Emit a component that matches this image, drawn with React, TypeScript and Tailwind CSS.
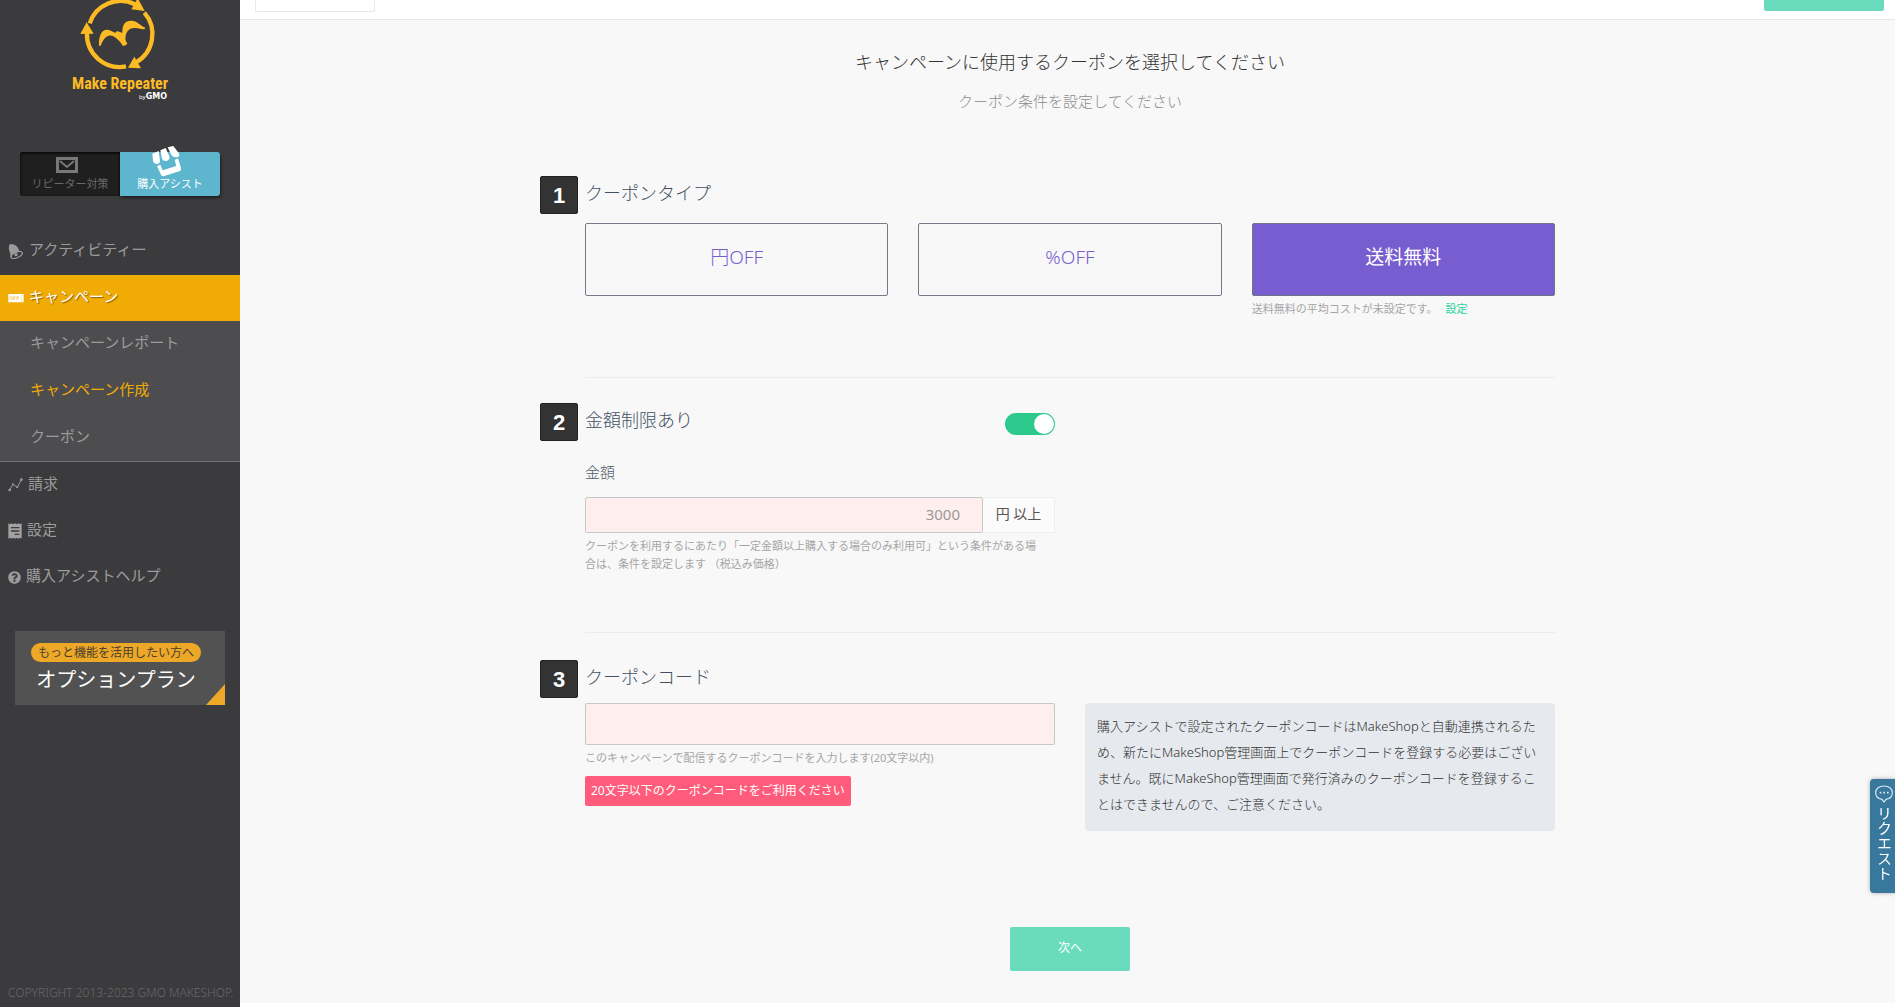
import React from "react";
import { FaQuestionCircle } from "react-icons/fa";

function Logo() {
  return (
    <a href="#" aria-label="Make Repeater by GMO" className="flex h-[152px] flex-col items-center">
      <svg className="h-[72px] w-[240px]" viewBox="0 0 720 216" fill="none" aria-hidden="true">
        <g stroke="#fcba24" strokeWidth="13">
          <path d="M269 70A98 98 0 0 1 405 13" />
          <path d="M433 38A98 98 0 0 1 407 188" />
          <path d="M378 199A98 98 0 0 1 261 98" />
        </g>
        <g fill="#fcba24">
          <path d="M413 -6L434 33L394 28Z" />
          <path d="M241 102L260 67L281 101Z" />
          <path d="M384 203L403 170L423 205Z" />
          <path d="M297 137C296 112 302 89 322 89C333 89 339 98 347 98C350 93 355 92 360 97L367 98C367 77 372 62 393 62C412 62 422 78 436 83C436 89 425 88 412 85C393 80 380 90 377 108C376 116 375 122 382 130C379 136 375 139 368 137C364 128 352 116 340 109C324 101 311 114 302 137Z" />
        </g>
      </svg>
      <span className="mt-[3px] font-['Liberation_Sans_Narrow','Roboto_Condensed',Roboto,sans-serif] text-[16px] leading-[18px] font-bold text-[#fcba24]">
        Make Repeater
      </span>
      <span className="flex w-[94px] items-baseline justify-end leading-[7px] text-white">
        <span className="text-[6px]">by</span>
        <span className="font-['DejaVu_Sans',sans-serif] text-[8px] font-bold">GMO</span>
      </span>
    </a>
  );
}

function ShopIcon() {
  return (
    <svg className="absolute -top-[6px] left-[30px] h-[32px] w-[32px]" viewBox="0 0 96 96" fill="#fff" aria-hidden="true">
      <path d="M7 23L26 15L30 45Q30 54 20 54Q9 53 9 43Z" />
      <path d="M31 13L47 6L58 31Q61 40 52 44Q40 47 36 38Z" />
      <path d="M53 4L70 0L86 21Q91 30 83 33Q70 36 64 27Z" />
      <path d="M21 60L31 56L38 73L79 60L74 42L84 37L93 67Q95 72 90 75L43 90Q36 92 33 86Z" />
    </svg>
  );
}

function ModeSwitch() {
  return (
    <div className="mx-5 flex h-11 rounded-[3px] text-[11px] leading-4">
      <button className="flex flex-1 flex-col items-center justify-end rounded-l-[3px] bg-[#1f1f1f] pb-1 text-[#69696b] shadow-[inset_0_1px_3px_#000]">
        <svg className="mr-[6px] mb-[3px] h-4 w-[22px]" viewBox="0 0 22 16" fill="none" stroke="#77787b" aria-hidden="true">
          <rect x="1.500" y="1.500" width="19" height="13" strokeWidth="3" />
          <path d="M4 4L11 10L18 4" strokeWidth="2" />
        </svg>
        <span>リピーター対策</span>
      </button>
      <button className="relative flex flex-1 flex-col items-center justify-end rounded-r-[3px] bg-[#5db6ce] pb-1 text-white shadow-[1px_2px_3px_rgba(0,0,0,0.5)]">
        <ShopIcon />
        購入アシスト
      </button>
    </div>
  );
}

function BellIcon() {
  return (
    <svg className="h-4 w-4" viewBox="0 0 48 48" aria-hidden="true">
      <path d="M5 4Q8 2 11 4Q22 3 30 15Q33 20 34 26L43 29L10 45L6 40Q9 34 5 27Q0 14 5 4Z" fill="#9b9b9c" />
      <ellipse cx="26" cy="36" rx="18" ry="8" transform="rotate(-24 26 36)" fill="#3b3b3d" stroke="#9b9b9c" strokeWidth="3.500" />
      <circle cx="24" cy="35" r="5" fill="#9b9b9c" />
    </svg>
  );
}

function TicketIcon() {
  return (
    <svg className="h-[10px] w-4" viewBox="0 0 48 30" aria-hidden="true">
      <path d="M1 3H36L37 1L39 3H47V28H1Z" fill="#fff" />
      <g fill="none" stroke="#f3b93a" strokeWidth="2">
        <rect x="6" y="11" width="7" height="9" rx="2" />
        <path d="M17 21V11H23M17 16H22M27 21V11H33M27 16H32" />
        <path d="M40 5V27" strokeDasharray="3 3" />
      </g>
    </svg>
  );
}

function ChartIcon() {
  return (
    <svg className="h-[14px] w-[15px]" viewBox="0 0 45 42" fill="none" stroke="#9b9b9c" strokeWidth="3" aria-hidden="true">
      <path d="M4 37L15 19L28 28L40 5" />
      <g fill="#9b9b9c" stroke="none">
        <circle cx="5" cy="36" r="4" />
        <circle cx="15" cy="19" r="3" />
        <circle cx="28" cy="28" r="3" />
        <circle cx="40" cy="5" r="4" />
      </g>
    </svg>
  );
}

function ReceiptIcon() {
  return (
    <svg className="h-4 w-[14px]" viewBox="0 0 42 48" aria-hidden="true">
      <path d="M1 1L6 4L11 1L16 4L21 1L26 4L31 1L36 4L41 1V47L36 44L31 47L26 44L21 47L16 44L11 47L6 44L1 47Z" fill="#a2a2a3" />
      <path d="M9 14H34M9 24H34M20 34H34" stroke="#3b3b3d" strokeWidth="4" />
    </svg>
  );
}

function NavItem({ icon, label, active = false }: { icon: React.ReactNode; label: string; active?: boolean }) {
  return (
    <a
      href="#"
      className={
        active
          ? "flex h-[46px] items-center gap-[5px] bg-[#f0ab05] pl-2 text-white [text-shadow:1px_1px_1px_#8a6200]"
          : "flex h-[46px] items-center gap-[5px] pl-2 text-[#9b9b9c]"
      }
    >
      <span className="flex min-w-[13px] shrink-0">{icon}</span>
      <span className="pb-1">{label}</span>
    </a>
  );
}

function Sidebar() {
  return (
    <aside className="flex w-[240px] shrink-0 flex-col bg-[#3b3b3d]">
      <Logo />
      <ModeSwitch />
      <nav className="mt-8 text-[15px] leading-5">
        <NavItem icon={<BellIcon />} label="アクティビティー" />
        <div className="mt-px" />
        <NavItem icon={<TicketIcon />} label="キャンペーン" active />
        <div className="flex flex-col border-b border-[#717173] bg-[#4d4d4f] text-[#9b9b9c]">
          <a href="#" className="flex h-[46px] items-center pb-1 pl-[30px]">キャンペーンレポート</a>
          <a href="#" className="flex h-[47px] items-center pb-1 pl-[30px] text-[#f0ab05]">キャンペーン作成</a>
          <a href="#" className="flex h-[47px] items-center pb-1 pl-[30px]">クーポン</a>
        </div>
        <NavItem icon={<ChartIcon />} label="請求" />
        <NavItem icon={<ReceiptIcon />} label="設定" />
        <NavItem icon={<FaQuestionCircle className="size-[13px]" />} label="購入アシストヘルプ" />
      </nav>
      <a href="#" className="relative mx-[15px] mt-[31px] flex h-[74px] flex-col items-center overflow-hidden bg-[#525252] pt-3 pr-2">
        <span className="rounded-full bg-[#eea827] px-[7px] text-[12px] leading-[19px] whitespace-nowrap text-[#4a4030]">もっと機能を活用したい方へ</span>
        <span className="mt-1 text-[20px] leading-7 whitespace-nowrap text-white">オプションプラン</span>
        <span className="absolute right-0 bottom-0 h-[21px] w-[19px] bg-[#eea827] [clip-path:polygon(100%_0,100%_100%,0_100%)]" />
      </a>
      <p className="mt-auto pb-1 pl-2 text-[12px] leading-5 font-light whitespace-nowrap text-[#68686a]">COPYRIGHT 2013-2023 GMO MAKESHOP.</p>
    </aside>
  );
}

function StepHeader({ step, title, children }: { step: number; title: string; children?: React.ReactNode }) {
  return (
    <div className="-ml-[45px] flex h-[38px] items-start">
      <span className="flex size-[38px] items-center justify-center rounded-[2px] border border-[#222] bg-[#333] font-['Liberation_Sans',Arial,sans-serif] text-[22px] font-bold text-white">
        {step}
      </span>
      <h2 className="ml-[7px] text-[18px] leading-[34px] font-light text-[#445062]">{title}</h2>
      {children}
    </div>
  );
}

function TypeButton({ label, selected = false }: { label: string; selected?: boolean }) {
  return (
    <button
      aria-pressed={selected}
      className={
        selected
          ? "block h-[73px] w-full rounded-[2px] border border-[#6f7487] bg-[#775dd0] pb-1 text-[19px] text-white"
          : "block h-[73px] w-full rounded-[2px] border border-[#747a8c] pb-1 text-[19px] font-light text-[#775dd0]"
      }
    >
      {label}
    </button>
  );
}

const fieldClass = "rounded-[2px] border border-[#c8c8c8] bg-[#ffeeee] outline-none";

export default function App() {
  return (
    <div className="flex min-h-screen bg-white font-['Noto_Sans','Noto_Sans_CJK_JP',sans-serif]" lang="ja">
      <Sidebar />
      <div className="flex min-w-0 flex-1 flex-col">
        <header className="flex h-5 items-start justify-between border-b border-[#e8e8e8] bg-white pr-[11px] pl-[15px]">
          <div className="h-3 w-[120px] rounded-b-[2px] border border-t-0 border-[#e8e8e8]" />
          <div className="h-[11px] w-[120px] rounded-b-[2px] bg-[#6adcbd]" />
        </header>
        <main className="bg-[#f8f8f8] pt-[30px] pb-8 pl-[5px]">
          <div className="mx-auto max-w-[1060px] px-[45px]">
            <h1 className="text-center text-[18px] leading-6 font-light text-[#333]">キャンペーンに使用するクーポンを選択してください</h1>
            <p className="mt-[17px] text-center text-[15px] leading-5 font-light text-[#8c8c8c]">クーポン条件を設定してください</p>

            <section className="mt-[65px] border-b border-[#ececec] pb-[59px]">
              <StepHeader step={1} title="クーポンタイプ" />
              <div className="mt-[9px] grid grid-cols-3 gap-[30px]">
                <TypeButton label="円OFF" />
                <TypeButton label="%OFF" />
                <div>
                  <TypeButton label="送料無料" selected />
                  <p className="mt-1 text-[11px] leading-[18px] text-[#a6a6a6]">
                    送料無料の平均コストが未設定です。
                    <a href="#" className="ml-2 text-[#1fd3a0]">設定</a>
                  </p>
                </div>
              </div>
            </section>

            <section className="border-b border-[#ececec] pt-[25px] pb-[59px]">
              <div className="w-[470px]">
                <StepHeader step={2} title="金額制限あり">
                  <label className="mt-[10px] ml-auto flex h-[22px] w-[50px] cursor-pointer justify-end rounded-full bg-[#2cc98c] p-px">
                    <input type="checkbox" defaultChecked aria-label="金額制限あり" className="size-5 appearance-none rounded-full bg-white" />
                  </label>
                </StepHeader>
                <label htmlFor="amount" className="mt-[21px] block text-[15px] leading-5 font-light text-[#4f5968]">金額</label>
                <div className="mt-[15px] flex h-9">
                  <input
                    id="amount"
                    type="text"
                    placeholder="3000"
                    className={`${fieldClass} min-w-0 flex-1 pr-[22px] pb-[2px] text-right text-[15px] placeholder:text-[#999]`}
                  />
                  <span className="w-[72px] border border-l-0 border-[#eee] bg-[#fbfbfb] text-center text-[14px] leading-[32px] text-[#555]">円 以上</span>
                </div>
                <p className="mt-1 pr-3 text-[11px] leading-[18px] text-[#a6a6a6]">
                  クーポンを利用するにあたり「一定金額以上購入する場合のみ利用可」という条件がある場合は、条件を設定します （税込み価格）
                </p>
              </div>
            </section>

            <section className="pt-[27px]">
              <StepHeader step={3} title="クーポンコード" />
              <div className="mt-[5px] grid grid-cols-2 gap-[30px]">
                <div>
                  <input type="text" aria-label="クーポンコード" className={`${fieldClass} block h-[42px] w-full px-3 text-[14px]`} />
                  <p className="mt-1 text-[11px] leading-[18px] text-[#a6a6a6]">このキャンペーンで配信するクーポンコードを入力します(20文字以内)</p>
                  <p className="mt-[9px] w-fit rounded-[2px] bg-[#ff5c7c] px-[6px] text-[12px] leading-[30px] text-white">20文字以下のクーポンコードをご利用ください</p>
                </div>
                <p className="rounded-[4px] bg-[#e6e9ee] px-3 pt-[10px] pb-[14px] text-[13px] leading-[26px] font-light text-[#333]">
                  購入アシストで設定されたクーポンコードはMakeShopと自動連携されるため、新たにMakeShop管理画面上でクーポンコードを登録する必要はございません。既にMakeShop管理画面で発行済みのクーポンコードを登録することはできませんので、ご注意ください。
                </p>
              </div>
            </section>

            <button className="mx-auto mt-24 block h-11 w-[120px] rounded-[2px] bg-[#6adcbd] pb-[2px] text-[12px] text-white">次へ</button>
          </div>
        </main>
      </div>

      <button className="fixed top-[779px] right-0 flex h-[114px] w-[25px] flex-col items-center rounded-l-[4px] bg-[#37789c] pt-[6px] pl-[3px] text-white shadow-[0_0_4px_rgba(0,0,0,0.3)]">
        <svg className="h-[18px] w-[18px]" viewBox="0 0 54 54" fill="none" stroke="#dce9f0" strokeWidth="3.500" aria-hidden="true">
          <path d="M21 43C9 41 2 33 2 23C2 11 13 3 27 3S52 11 52 23C52 33 45 41 33 43L27 51Z" />
          <path d="M14 23H19M25 23H30M36 23H41" strokeWidth="5" />
        </svg>
        <span className="mt-[3px] text-[15px] leading-5 [writing-mode:vertical-rl]">リクエスト</span>
      </button>
    </div>
  );
}
